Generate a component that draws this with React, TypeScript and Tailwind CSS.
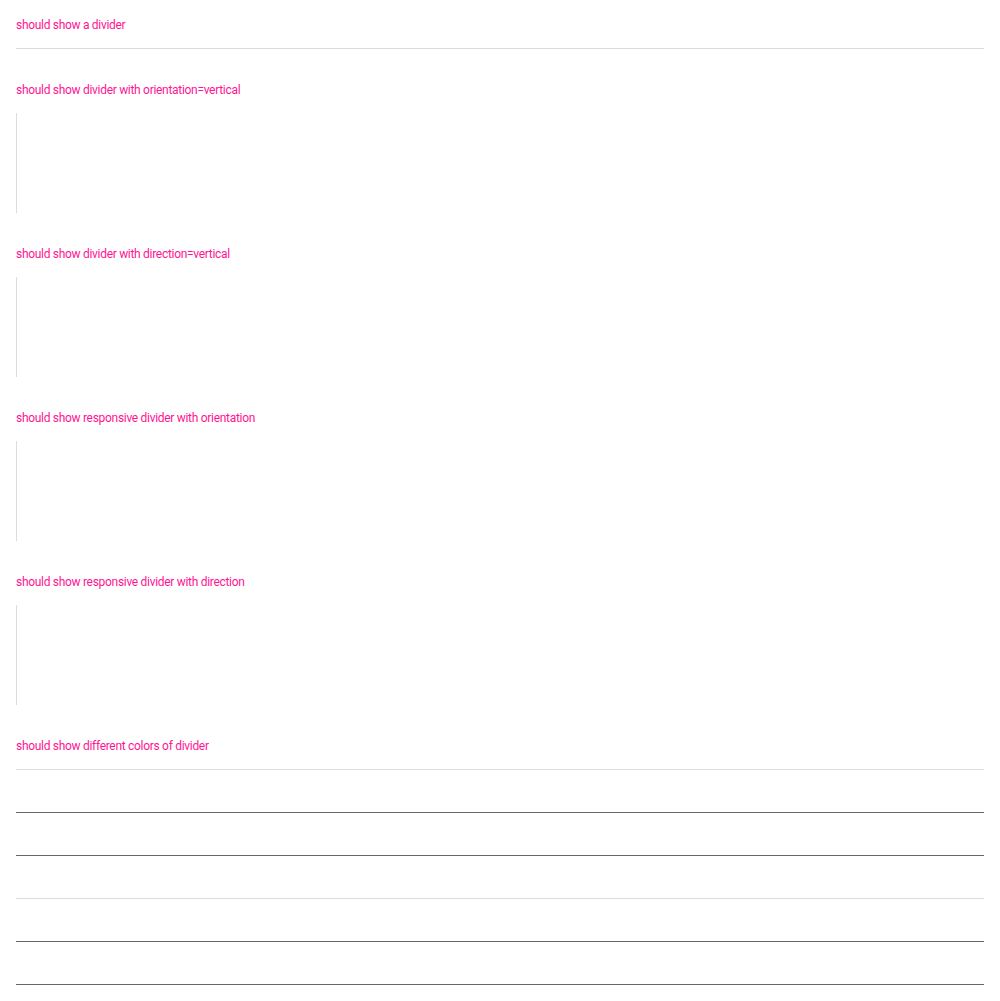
import React from 'react';

const verticalSections = [
  'should show divider with orientation=vertical',
  'should show divider with direction=vertical',
  'should show responsive divider with orientation',
  'should show responsive divider with direction',
];

const colorLines = ['#dcdcdc', '#666666', '#666666', '#dcdcdc', '#666666', '#666666'];

function Title({ children }: { children: React.ReactNode }) {
  return (
    <p className="h-4 text-[12px] leading-[18px] text-[#ff1493] tracking-[-0.3px]" style={{ fontFamily: 'Roboto, sans-serif' }}>
      {children}
    </p>
  );
}

export default function App() {
  return (
    <div className="bg-white px-4 pt-4 pb-4 min-h-[1001px]">
      {/* horizontal */}
      <div>
        <Title>should show a divider</Title>
        <hr className="mt-4 border-0 h-px bg-[#dcdcdc]" />
      </div>

      {/* vertical ones */}
      {verticalSections.map((t) => (
        <div key={t} className="mt-8">
          <Title>{t}</Title>
          <div className="mt-4 h-[100px] w-px bg-[#dcdcdc]" />
        </div>
      ))}

      {/* colours */}
      <div className="mt-8">
        <Title>should show different colors of divider</Title>
        <div className="mt-4 flex flex-col gap-[42px]">
          {colorLines.map((c, i) => (
            <div key={i} className="h-px w-full" style={{ backgroundColor: c }} />
          ))}
        </div>
      </div>
    </div>
  );
}
